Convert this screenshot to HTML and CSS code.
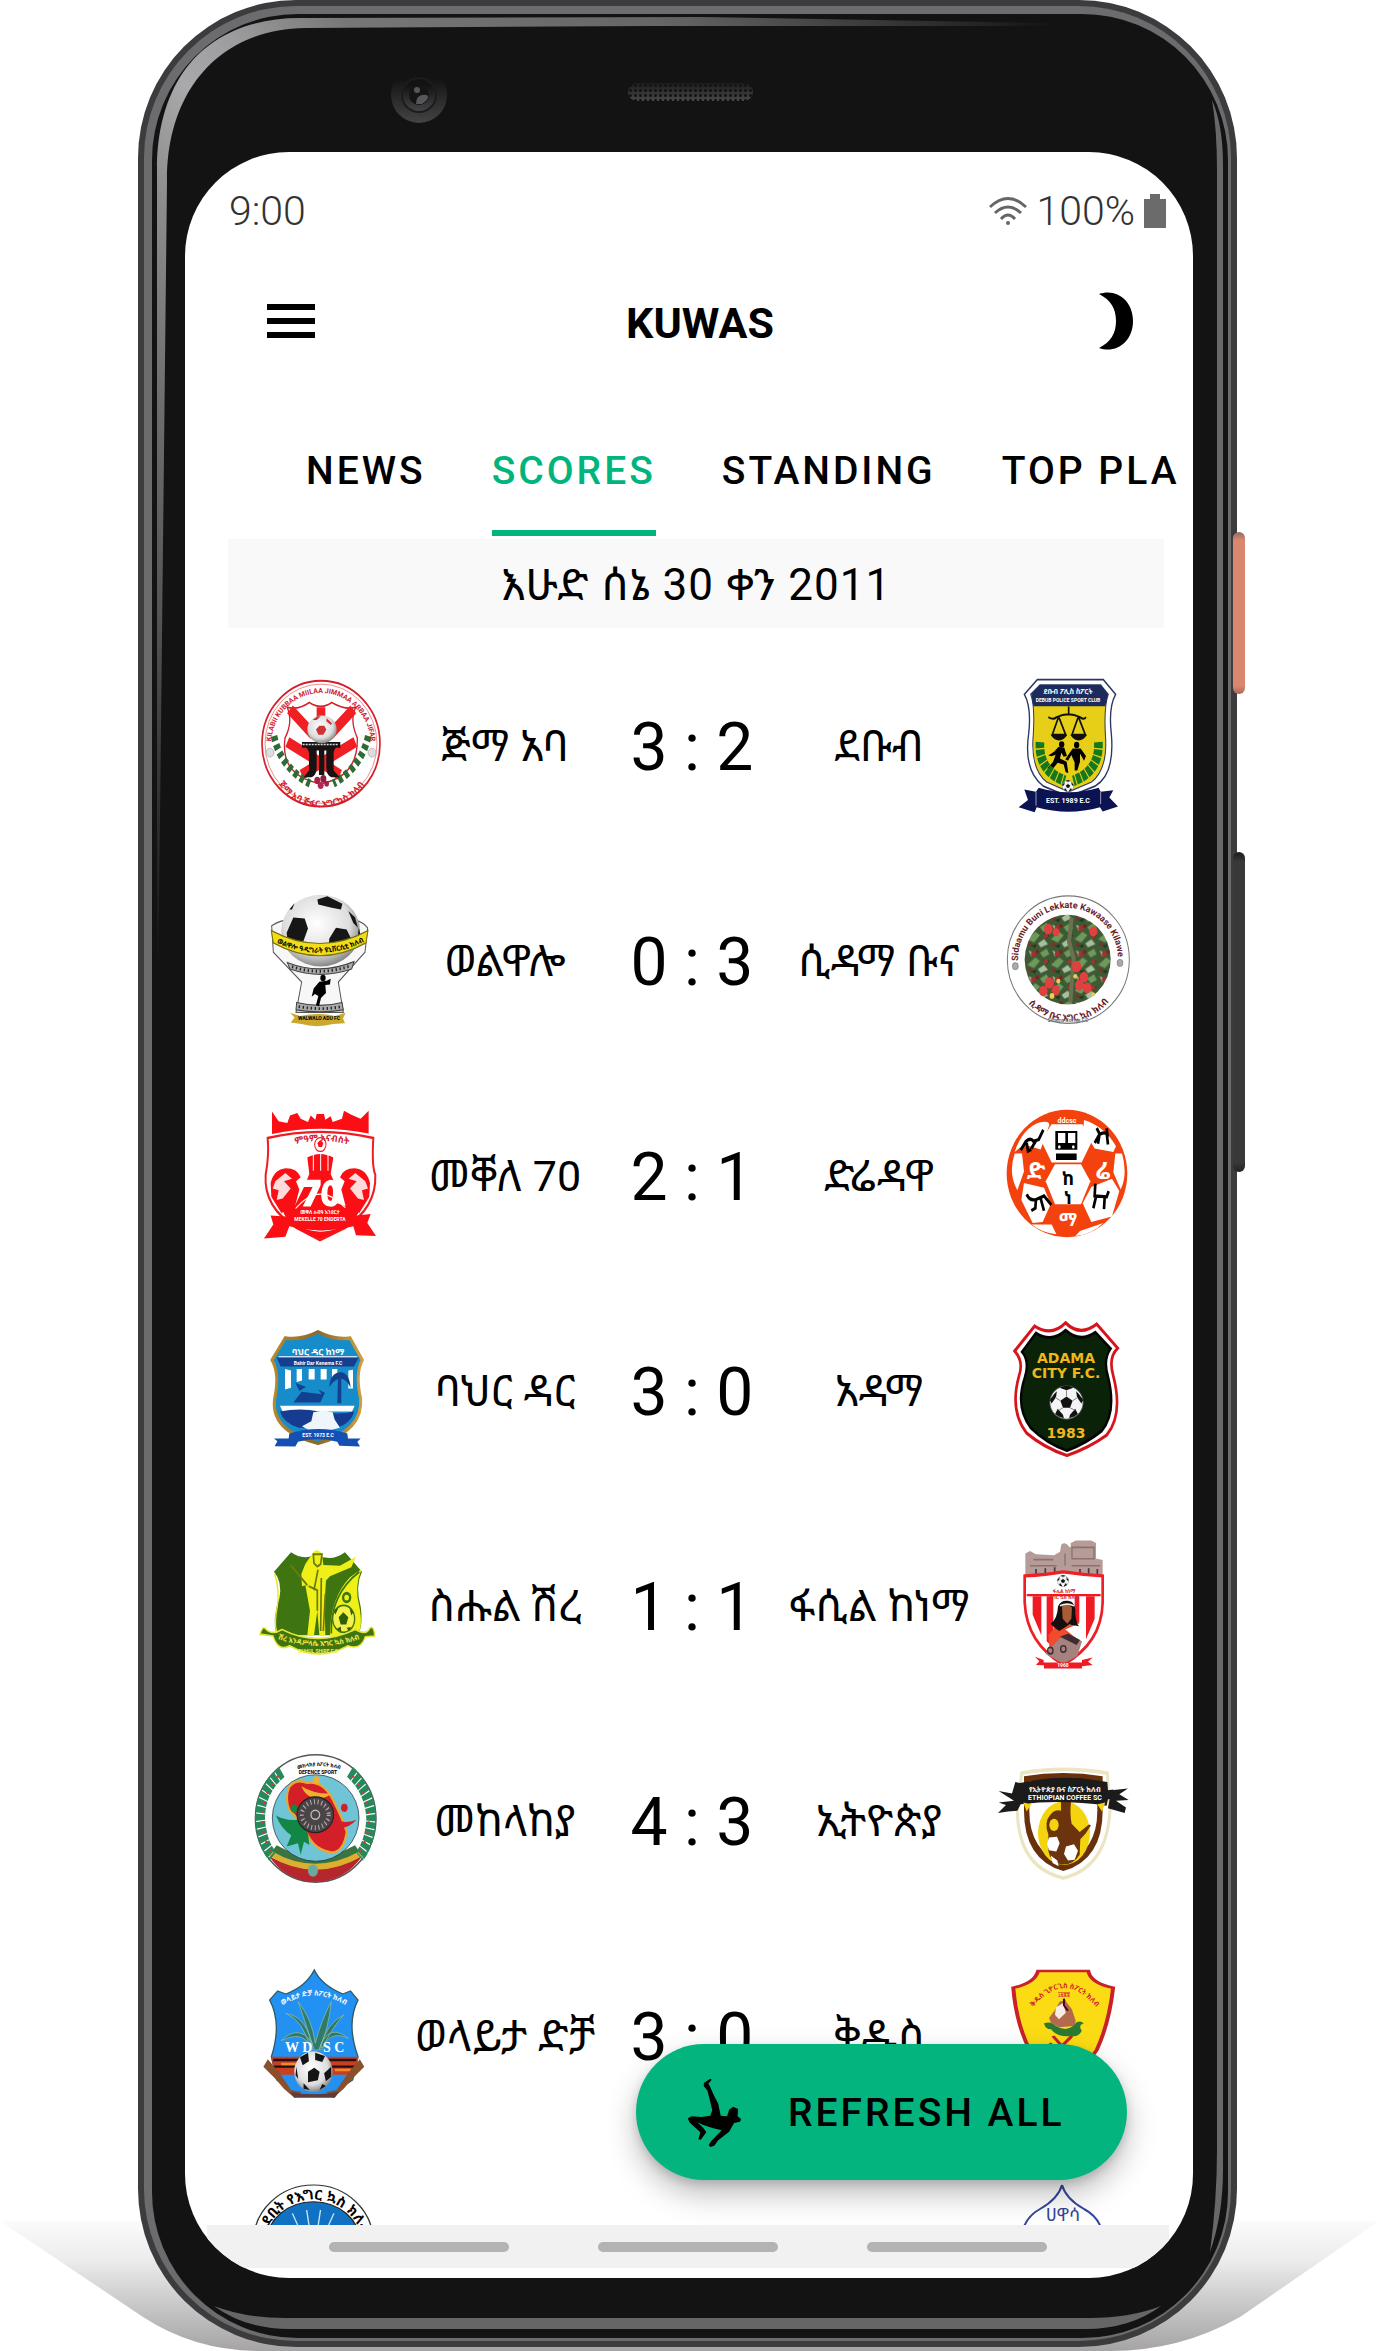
FILE: index.html
```html
<!DOCTYPE html>
<html lang="am">
<head>
<meta charset="utf-8">
<title>KUWAS – Scores</title>
<link rel="stylesheet" href="styles.css">
</head>
<body>
<svg class="defs" aria-hidden="true">
  <defs>
    <symbol id="ball" viewBox="0 0 40 40">
      <circle cx="20" cy="20" r="19" fill="#f4f4f4" stroke="#555" stroke-width="1"/>
      <path d="M20 13l7 5-3 8h-8l-3-8zM12 3l8 3 8-3-5-2h-6zM1 17l5-7 3-3-1 7-5 7zM39 17l-5-7-3-3 1 7 5 7zM7 33l3-6 6 7 1 4-6-2zM33 33l-3-6-6 7-1 4 6-2z" fill="#111"/>
      <path d="M20 13V6M27 18l6-4M24 26l6 3M16 26l-5 3M13 18l-6-4" stroke="#777" fill="none"/>
    </symbol>
    <pattern id="berries" width="71" height="63" patternUnits="userSpaceOnUse">
      <rect width="71" height="63" fill="#3d5a35"/>
      <path d="M0 40l24-18 14 8-18 18zM38 10l20-10 8 14-18 8z" fill="#6d9a5a"/>
      <path d="M32 50l18-10 12 12-22 8zM4 4l14 6-6 10z" fill="#a9bf9c"/>
      <path d="M48 26l18 4-8 10zM10 56l18-4-4 10z" fill="#24361f"/>
      <circle cx="18" cy="13" r="7" fill="#a92e2b"/><circle cx="30" cy="8" r="5" fill="#7b1f22"/>
      <circle cx="56" cy="32" r="6" fill="#a4352e"/><circle cx="8" cy="52" r="5" fill="#8a2a28"/>
    </pattern>
    <linearGradient id="shade" x1="0" y1="0" x2="0" y2="1">
      <stop offset="0" stop-color="#fbfbfb"/><stop offset=".3" stop-color="#ececec"/><stop offset="1" stop-color="#a5a3a4"/>
    </linearGradient>
    <linearGradient id="gold" x1="0" y1="0" x2="1" y2="0">
      <stop offset="0" stop-color="#b98a2b"/><stop offset=".5" stop-color="#8a6a2a"/><stop offset="1" stop-color="#d0a040"/>
    </linearGradient>
    <radialGradient id="orb" cx=".45" cy=".4" r=".6">
      <stop offset="0" stop-color="#fff"/><stop offset=".7" stop-color="#ddd"/><stop offset="1" stop-color="#888"/>
    </radialGradient>
    <linearGradient id="gloss" gradientUnits="userSpaceOnUse" x1="-500" y1="500" x2="550" y2="-550">
      <stop offset=".09" stop-color="#131313"/><stop offset=".26" stop-color="#555"/><stop offset=".36" stop-color="#6d6d6d"/>
      <stop offset=".457" stop-color="#8d8d8d"/><stop offset=".524" stop-color="#a9a9ab"/><stop offset=".57" stop-color="#9c9c9e"/>
      <stop offset=".63" stop-color="#777"/><stop offset=".78" stop-color="#666"/><stop offset=".97" stop-color="#131313"/>
    </linearGradient>
  </defs>
</svg>

<main class="stage">
  <svg class="ground" viewBox="0 0 1379 130" preserveAspectRatio="none" aria-hidden="true">
    <path d="M0 0L143 96Q195 130 260 130H1110Q1180 130 1240 96L1379 0z" fill="url(#shade)"/>
  </svg>
  <div class="phone">
    <span class="key power"></span>
    <span class="key volume"></span>
    <div class="ring">
      <div class="bezel">
        <div class="screen">
          <header>
            <div class="status">
              <span>9:00</span>
              <span class="status-right">
                <svg width="38" height="30" viewBox="0 0 38 30" fill="none" stroke="#666" stroke-width="3" aria-hidden="true"><path d="M1 11Q19-6 37 11M6 17Q19 5 32 17M12 23Q19 15 26 23"/><circle cx="19" cy="27" r="2" fill="#666" stroke="none"/></svg>
                <span>100%</span>
                <svg width="22" height="34" viewBox="0 0 22 34" aria-hidden="true"><path d="M6 0h10v5h6v29H0V5h6z" fill="#6b6b6b"/></svg>
              </span>
            </div>
            <div class="appbar">
              <button class="icon-button" aria-label="Menu"><svg width="48" height="34" viewBox="0 0 48 34"><path d="M0 0h48v6H0zM0 14h48v6H0zM0 28h48v6H0z"/></svg></button>
              <h1>KUWAS</h1>
              <button class="icon-button end" aria-label="Dark mode"><svg width="34" height="58" viewBox="0 0 34 58"><path d="M0 2C17-4 34 8 34 29S17 62 0 56C12 50 17 41 17 29S12 8 0 2z"/></svg></button>
            </div>
            <nav class="tabs">
              <a href="#news">NEWS</a>
              <a href="#scores" class="active" aria-current="page">SCORES</a>
              <a href="#standing">STANDING</a>
              <a href="#top">TOP PLAYERS</a>
            </nav>
          </header>

          <h2 class="date">እሁድ ሰኔ 30 ቀን 2011</h2>

          <ul class="matches">
            <li class="match">
              <svg class="crest" viewBox="0 0 180 215" aria-hidden="true">
                <g transform="translate(2 4) scale(.3333 .4082)">
                  <ellipse cx="273" cy="254" rx="177" ry="154" fill="#fff" stroke="#d3202b" stroke-width="5"/>
                  <ellipse cx="273" cy="254" rx="168" ry="146" fill="none" stroke="#e66" stroke-width="2"/>
                  <path d="M172 165Q205 172 238 153Q273 172 305 153Q345 172 377 165Q358 195 382 240Q385 335 273 352Q150 335 165 240Q190 200 172 165z" fill="#fff" stroke="#d3202b" stroke-width="4"/>
                  <path d="M180 170L250 232M370 170L300 232M172 250L330 330M376 250L215 330M273 165V190" stroke="#f01f24" stroke-width="26"/>
                  <path d="M132 235Q150 310 240 352M415 235Q395 310 310 352" stroke="#2f6b35" stroke-width="20" stroke-dasharray="13 9" fill="none"/>
                  <path d="M216 250h115v14h-12q-10 5-8 22v34l18 16h-25q-15-5-15-25v-40h-6v60h-16v-60h-7v40q0 20-15 25h-24l16-16v-40q0-12-10-16h-11z" fill="#171314"/>
                  <ellipse cx="276" cy="219" rx="44" ry="34" fill="url(#orb)"/>
                  <path d="M258 219l10-9h15l6 10-9 12h-15zM248 196l14-9h10l-12 9zM290 192l16 12-3 4-14-9z" fill="#cf3335"/>
                  <path d="M218 256h108" stroke="#ddd" stroke-width="4" stroke-dasharray="6 3"/>
                  <circle cx="262" cy="344" r="9" fill="#a2234a"/><circle cx="280" cy="340" r="9" fill="#8c1d3e"/><circle cx="272" cy="356" r="9" fill="#b32b53"/><circle cx="290" cy="352" r="7" fill="#a2234a"/>
                  <ellipse cx="120" cy="276" rx="12" ry="11" fill="#ddd" stroke="#777"/><ellipse cx="426" cy="276" rx="12" ry="11" fill="#ddd" stroke="#777"/>
                </g>
                <path id="arc1" d="M43 110A50 53 0 0 1 143 110" fill="none"/><path id="arc1b" d="M40 122A54 57 0 0 0 147 122" fill="none"/>
                <text class="tiny red arc"><textPath href="#arc1" startOffset="50%">KILABII KUBBAA MIILAA JIMMAA ABBAA JIFAR</textPath></text>
                <text class="small red arc"><textPath href="#arc1b" startOffset="50%">ጅማ አባ ጅፋር እግርኳስ ክለብ</textPath></text>
              </svg>
              <span class="team">ጅማ አባ</span><span class="score">3 : 2</span><span class="team">ደቡብ</span>
              <svg class="crest" viewBox="0 0 180 215" aria-hidden="true">
                <g transform="translate(4 4) scale(.3333 .4082)">
                  <path d="M172 97H370L407 133Q385 165 394 230Q405 330 345 358L266 384L190 358Q130 320 146 230Q155 165 133 133z" fill="#fff" stroke="#2a3765" stroke-width="4"/>
                  <path d="M180 110H362L385 133Q372 160 376 230Q385 315 335 348L266 372L200 348Q150 315 160 230Q165 160 152 133z" fill="#e8cf17" stroke="#2a3765" stroke-width="3"/>
                  <path d="M180 110H362L384 133L376 162H160L154 133z" fill="#1c2a5c"/>
                  <path d="M205 189q15 8 25 0q35-14 70 0q12 8 18 0M266 163v22M235 190l-18 42h40l-20-42M294 190l-18 42h40l-20-42" stroke="#111" stroke-width="5" fill="none"/>
                  <path d="M212 232h50q-10 14-25 14t-25-14zM271 232h50q-10 14-25 14t-25-14z" fill="#111"/>
                  <circle cx="245" cy="256" r="8"/><path d="M235 262l18 2 8 20-10 2-7-10-4 14 20 8 5 28-8-2-6-19-18-4-12 12-20 2 18-16 8-18-12 4-10-2 18-10z"/>
                  <circle cx="290" cy="257" r="8"/><path d="M278 266h24l16 18-6 12-12-18v20l-8 22h-8v-20l-10-18-10 14-8-4z"/>
                  <path d="M180 250Q175 320 255 345M355 250Q360 320 280 345" stroke="#16781d" stroke-width="26" stroke-dasharray="15 3" fill="none"/>
                  <path d="M133 366l35 6 8-10q90 22 180 0l6 10 38-4-12 18 26 22-46 12-8-10q-95 22-190 0l-6 12-48-12 28-18z" fill="#0c1352"/>
                  <path d="M168 372v34M362 372v30" stroke="#ccd" stroke-width="2"/>
                </g>
                <svg x="86" y="144" width="12" height="12"><use href="#ball"/></svg>
                <text class="tiny white" x="92" y="58" text-anchor="middle">ደቡብ ፖሊስ ስፖርት</text>
                <text class="micro white" x="92" y="66" text-anchor="middle">DEBUB POLICE SPORT CLUB</text>
                <text class="tiny white" x="92" y="167" text-anchor="middle">EST. 1989 E.C</text>
              </svg>
            </li>
            <li class="match">
              <svg class="crest" viewBox="0 0 180 215" aria-hidden="true">
                <g transform="translate(2 -211) scale(.3333 .4082)">
                  <path d="M125 700Q150 685 190 685H370Q400 690 413 705L405 765L325 838L340 912H198L215 838L130 765z" fill="#f7f7f7" stroke="#555" stroke-width="3"/>
                  <ellipse cx="272" cy="712" rx="118" ry="88" fill="url(#orb)"/>
                  <path d="M190 680l34 2 10 25-18 40h-42l-4-30zM262 636l30-8 45 18-4 14-28-4-40-8zM318 705l32 4 14 24-10 22-58-4 2-20zM178 660l16-16-8 16zM355 664l20 15 9 26-14-12zM386 705l8 24-12 12z" fill="#161616"/>
                  <path d="M124 712Q270 775 414 712L408 742Q270 805 130 742z" fill="#f3dc18" stroke="#77720e" stroke-width="3"/>
                  <path d="M172 790Q270 822 372 788L365 806Q270 832 180 806zM200 888q70 14 136 0l4 18q-70 10-142 0z" fill="#aaa" stroke="#444" stroke-width="3"/>
                  <path d="M186 800Q270 824 362 798M206 898q70 10 128 0" stroke="#222" stroke-width="7" stroke-dasharray="4 8" fill="none"/>
                  <circle cx="279" cy="828" r="8"/><path d="M268 837l22-2 12-5-2 14-14 1 2 20-15 12-6 20-9-3 7-22-10-5-10 7 6-20z"/>
                  <path d="M180 913l30 8q58-10 105 0l32-8-8 14 6 12-36 2q-48 10-95 0l-32-4 12-12z" fill="#cba72b"/>
                </g>
                <path id="arc2" d="M47 91Q92 113 138 90" fill="none"/>
                <text class="tiny arc"><textPath href="#arc2" startOffset="50%">ወልዋሎ ዓዲግራት ዩኒቨርሲቲ ክለብ</textPath></text>
                <text class="micro" x="91" y="169" text-anchor="middle">WALWALO ADU FC</text>
              </svg>
              <span class="team">ወልዋሎ</span><span class="score">0 : 3</span><span class="team">ሲዳማ ቡና</span>
              <svg class="crest" viewBox="0 0 180 215" aria-hidden="true">
                <g transform="translate(4 -211) scale(.3333 .4082)">
                  <ellipse cx="265" cy="783" rx="183" ry="156" fill="#fff" stroke="#777" stroke-width="3"/>
                  <ellipse cx="263" cy="783" rx="129" ry="110" fill="url(#berries)"/>
                  <path d="M275 680l-8 60 14 40-10 108" stroke="#6c7050" stroke-width="12" fill="none"/>
                  <g fill="#e0413f"><circle cx="290" cy="800" r="14"/><circle cx="312" cy="826" r="13"/><circle cx="322" cy="852" r="13"/><circle cx="298" cy="846" r="13"/><circle cx="208" cy="840" r="14"/><circle cx="228" cy="858" r="12"/><circle cx="190" cy="860" r="13"/><circle cx="205" cy="708" r="13"/><circle cx="228" cy="716" r="10"/><circle cx="340" cy="714" r="12"/></g>
                  <g fill="#e8d04b"><circle cx="216" cy="872" r="7"/><circle cx="286" cy="824" r="6"/><circle cx="235" cy="836" r="6"/><circle cx="340" cy="868" r="5"/></g>
                  <circle cx="106" cy="799" r="9" fill="#aaa" stroke="#444"/><circle cx="420" cy="791" r="9" fill="#aaa" stroke="#444"/>
                </g>
                <path id="arc3" d="M42 111A50 52 0 0 1 142 107" fill="none"/><path id="arc3b" d="M38 116A54 55 0 0 0 146 114" fill="none"/>
                <text class="small maroon arc"><textPath href="#arc3" startOffset="50%">Sidaamu Buni Lekkate Kawaase Kilawe</textPath></text>
                <text class="small maroon arc"><textPath href="#arc3b" startOffset="50%">ሲዳማ ቡና እግር ኳስ ክለብ</textPath></text>
                <text class="micro gray" x="92" y="171" text-anchor="middle">Sidama Coffee F.C</text>
              </svg>
            </li>
            <li class="match">
              <svg class="crest" viewBox="0 0 180 215" aria-hidden="true">
                <g transform="translate(2 -426) scale(.3333 .4082)" fill="#fb0e14">
                  <path d="M126 1155l20 24 26 4 8-18 22-6 10 14 22 8 8-16 14 10 4-14h22l4 14 16-8 6 14 28-8 6-20 22 10 28 10 24-20v56Q270 1185 126 1210z"/>
                  <path d="M113 1220Q270 1190 430 1220Q425 1290 436 1310Q440 1390 345 1440L270 1470L200 1440Q100 1390 107 1310Q118 1260 113 1220z" fill="#fff" stroke="#ef1c22" stroke-width="6"/>
                  <path d="M232 1268q38-18 78 0l-8 40 16 30 4 50-50 20-60-4-20-14 30-50 16-32z"/>
                  <path d="M122 1330q10-34 46-36 34 0 44 22l-14 10 10 20-14 44-40 14-30-40zM420 1330q-10-34-46-36-34 0-44 22l14 10-10 20 14 44 40 14 30-40z"/>
                  <path d="M136 1326l30-20 20 14-24 6 20 18-24 24-18 4 6-24-18-4zM406 1326l-30-20-20 14 24 6-20 18 24 24 18 4-6-24 18-4z" fill="#fff" opacity=".85"/>
                  <path d="M160 1400q110-50 222 0l-40 42-72 26-72-26z"/>
                  <path d="M218 1322h54v14l-30 52h-24l30-48h-30zM300 1322q28 0 28 34t-28 32-26-32 26-34zm0 14q-8 4-8 20t8 18 9-18-9-20z" fill="#fff"/>
                  <path d="M190 1400q80-85 165 0M215 1438q58 20 115 0M250 1250v50M272 1250v50M294 1250v50" stroke="#fff" stroke-width="3" fill="none"/>
                  <circle cx="271" cy="1236" r="17" fill="#fff" stroke="#ef1c22" stroke-width="3"/><path d="M262 1232l9-7 9 7-4 10h-10z"/>
                  <path d="M122 1410l45 2q-10-8-5-26 110 26 222-4 4 22-4 28l42-4-10 22 26 32-60-2-8-22q-96 20-192 0l-12 26-64 4 28-34z"/>
                </g>
                <path id="arc4" d="M50 84Q92 66 138 84" fill="none"/>
                <text class="small red arc"><textPath href="#arc4" startOffset="50%">ምዓም አናብስት</textPath></text>
                <text class="micro white" x="92" y="148" text-anchor="middle">መቐለ ሰብዓ እንደርታ</text>
                <text class="micro white" x="92" y="155" text-anchor="middle">MEKELLE 70 ENDERTA</text>
              </svg>
              <span class="team">መቐለ 70</span><span class="score">2 : 1</span><span class="team">ድሬዳዋ</span>
              <svg class="crest" viewBox="0 0 180 215" aria-hidden="true">
                <g transform="translate(4 -426) scale(.3333 .4082)">
                  <ellipse cx="261" cy="1307" rx="181" ry="156" fill="#f4420e"/>
                  <g fill="#fff"><path d="M215 1186h92l30 40-32 54h-90l-32-54z"/><path d="M225 1284h78l28 42-28 56h-78l-28-56z"/><path d="M132 1236l-28 18Q128 1196 178 1182q30-6 30 6l-26 60z"/><path d="M312 1176q62 16 96 64l-8 14-56-8-34-46z"/><path d="M104 1258h22l6 44-20 46q-28-40-8-90zM406 1258h20q18 50-4 88l-22-42z"/><path d="M132 1330l60 12 20 40-24 44-30 2-34-56zM334 1340l62-20 22 30-22 62-62 14-26-46z"/><path d="M155 1432h60l14 24q-44-4-74-24zM300 1448l70-20q-34 28-84 32z"/></g>
                  <path d="M226 1203h66v46h-66zM228 1258h62v16h-62z"/><path d="M234 1208h22v24h-22zM264 1208h22v24h-22z" fill="#fff"/><circle cx="238" cy="1242" r="4" fill="#fff"/><circle cx="280" cy="1242" r="4" fill="#fff"/>
                  <g fill="none" stroke="#000" stroke-width="8"><path d="M122 1250l16-22q14-10 22 0l16-4 14-24M140 1232l4 20 10-4M168 1226l-14 20M344 1232l14-20q12-8 24-2l-2-14M350 1196l10 16M358 1214l-4 20M380 1208l4 28M140 1358q10 18 30 12l22-8 22 22M168 1370l-2 22-12 6M182 1368l10 30M346 1332l-2 30 36 2 6-14M348 1364l-8 28M374 1366l-2 28"/></g>
                </g>
                <text class="tiny white" x="91" y="57" text-anchor="middle">ddcsc</text>
                <text class="badge white" x="60" y="113" text-anchor="middle">ድ</text><text class="badge white" x="127" y="113" text-anchor="middle">ሬ</text>
                <text class="mid" x="92" y="119" text-anchor="middle">ከ</text><text class="mid" x="92" y="138" text-anchor="middle">ነ</text>
                <text class="mid white" x="92" y="160" text-anchor="middle">ማ</text>
              </svg>
            </li>
            <li class="match">
              <svg class="crest" viewBox="0 0 180 215" aria-hidden="true">
                <g transform="translate(2 -1) scale(.3333 .4082)">
                  <path d="M166 142Q215 148 264 127Q315 148 360 142L397 196Q375 230 392 290Q400 370 264 400Q120 370 134 290Q150 230 126 196z" fill="#178ccb" stroke="url(#gold)" stroke-width="9"/>
                  <path d="M140 190H386L372 212H152z" fill="#173d8e"/><path d="M146 188H382" stroke="#fff" stroke-width="3"/>
                  <path d="M165 218l18 4v42l-18 4zM200 218h16v28l-16 4zM236 218h18v26h-18zM272 218h18v26h-18zM306 218h16v26h-16zM355 222l14-2v46h-14z" fill="#fff"/>
                  <path d="M190 300l25-26 60 6-10-12 20 8-14 24zM196 252l32 10-20 10zM324 238h10v64h-12zM298 262q2-32 30-36 30-2 34 38-12-20-28-22-20 0-36 20z" fill="#12418f"/>
                  <path d="M150 308H374L366 322H158z" fill="#fff"/>
                  <path d="M150 322q60-10 118 0t104 0Q365 350 320 362H206Q160 350 150 322z" fill="#153c90"/>
                  <path d="M250 324l30-4 28 4 6 18 16 20-40 8h-48l-26-12 28-12z" fill="#eef5fb"/>
                  <path d="M132 388h44l2-12q88-22 174 0l2 12h38l-10 8 8 12-62-2-6-10q-58-12-118 0l-8 12-62-1 8-12z" fill="#1450b4"/>
                </g>
                <text class="small white" x="90" y="74" text-anchor="middle">ባህር ዳር ከነማ</text>
                <text class="micro white" x="90" y="84" text-anchor="middle">Bahir Dar Kenema F.C</text>
                <text class="micro white" x="90" y="156" text-anchor="middle">EST. 1973 E.C</text>
              </svg>
              <span class="team">ባህር ዳር</span><span class="score">3 : 0</span><span class="team">አዳማ</span>
              <svg class="crest" viewBox="0 0 180 215" aria-hidden="true">
                <g transform="translate(4 -1) scale(.3333 .4082)">
                  <path d="M164 113Q215 140 257 105Q300 140 350 108L413 167Q384 190 400 235Q430 330 380 380Q330 410 261 430Q190 410 140 375Q88 320 117 235Q132 200 104 174z" fill="#fff" stroke="#d6141c" stroke-width="8"/>
                  <path d="M168 130Q215 155 257 123Q300 155 346 128L392 168Q368 195 385 240Q410 325 365 370Q320 400 261 418Q200 400 152 362Q105 310 134 240Q150 200 126 176z" fill="#092208" stroke="#050505" stroke-width="7"/>
                </g>
                <svg x="73" y="103" width="35" height="37" viewBox="0 0 40 40"><use href="#ball"/></svg>
                <text class="adama" x="90" y="82" text-anchor="middle">ADAMA</text><text class="adama" x="90" y="97" text-anchor="middle">CITY F.C.</text><text class="adama" x="90" y="157" text-anchor="middle">1983</text>
              </svg>
            </li>
            <li class="match">
              <svg class="crest" viewBox="0 0 180 215" aria-hidden="true">
                <g transform="translate(2 -216) scale(.3333 .4082)">
                  <path d="M183 667Q215 685 245 676L285 680Q315 685 345 667L396 715Q375 750 392 800Q400 840 385 870H140Q125 830 148 780Q158 740 132 715z" fill="#3f7510"/>
                  <path d="M134 720Q150 760 142 800Q130 850 144 868" fill="none" stroke="#e8e523" stroke-width="4"/>
                  <path d="M395 708Q372 750 388 800Q400 850 382 870H300Q300 780 360 728z" fill="#eef018"/>
                  <path d="M388 715Q300 770 304 866" fill="none" stroke="#3f7510" stroke-width="5"/>
                  <circle cx="341" cy="830" r="33" fill="#f4f24a" stroke="#3f7510" stroke-width="4"/><path d="M326 826l14-12 15 12-6 18h-17zM312 810l14-8-10 18zM358 802l12 12-6 8zM320 855l12-6 2 12zM350 852l14-2-8 10z" fill="#2f6008"/><circle cx="350" cy="778" r="14" fill="#3f7510"/><circle cx="350" cy="778" r="7" fill="#eef018"/>
                  <path d="M246 672q14-20 30 0l4 26 50 2 48-22-14 26-64 22-12 10-4 50 2 84h-18l-6-60-10 60h-20l8-60-14-62-10 2-2-30 12-24z" fill="#eef018"/>
                  <path d="M250 672h26l-4 24-10 6-10-8zM236 750l26 10v50M274 730l-2 130M286 770l-6 90M182 698l50 50M264 710l-12 50" stroke="#6c7812" stroke-width="5" fill="none"/>
                  <path d="M90 868q8-22 16-14 20 18 50 2 105 44 220 0 34 16 44-4 12-6 14 20l-28 2q-14 34-52 22-88 40-175 0-34 16-50-24l-34-4z" fill="#3f7510" stroke="#e1e637" stroke-width="4"/>
                </g>
                <path id="arc5" d="M47 142Q92 158 135 142" fill="none"/>
                <text class="tiny yellow arc"><textPath href="#arc5" startOffset="50%">ሽረ እንዳሥላሴ እግር ኳስ ክለብ</textPath></text>
                <text class="micro yellow" x="90" y="157" text-anchor="middle">SUHUL SHIRE F.C</text>
              </svg>
              <span class="team">ስሑል ሽረ</span><span class="score">1 : 1</span><span class="team">ፋሲል ከነማ</span>
              <svg class="crest" viewBox="0 0 180 215" aria-hidden="true">
                <g transform="translate(4 -216) scale(.3333 .4082)">
                  <path d="M136 725V670l14-6 18 8 54 2 18-8 4-18q12-8 22 4l6 4v-12l16-6h46l14 6v38l20 4V725z" fill="#b69c98"/>
                  <path d="M150 700h80M255 670v30M276 655h66v28h-66zM275 700h85M160 685h60" stroke="#8c716e" stroke-width="4" fill="none"/><path d="M168 708v14M196 706v14M224 704v14M300 708v14M326 706v14M352 708v14" stroke="#4d3436" stroke-width="5"/>
                  <path d="M134 725Q200 722 250 715Q310 722 368 725V790Q365 890 250 942Q140 890 134 790z" fill="#fff" stroke="#ef1f26" stroke-width="8"/>
                  <path d="M158 775h26v95l-26-50zM200 775h20v125l-20-15zM284 775h14v120l-14 15zM318 775h26v55l-26 50z" fill="#f01b22"/>
                  <path d="M140 772H362" stroke="#f01b22" stroke-width="6"/>
                  <path d="M205 870l20-20h20l52-12v70l-46 28-42-30z" fill="#ef4b2c"/><path d="M256 856l44-16v45z" fill="#fff"/>
                  <path d="M212 842q20-10 22-42 8-16 30-14 24 2 22 32 4 28 12 30l-30-4-30 16q-16-8-26-18z" fill="#15100f"/><path d="M246 800q16-8 30 2l-2 28-12 12-14-12z" fill="#a95b36"/><path d="M240 798q22-8 42 0" stroke="#eee" stroke-width="4" fill="none"/>
                  <path d="M196 915l40-34 24-16 46 20-14 36-42 20z" fill="#a4827f"/><path d="M240 874l24-8 36 16-10 12z" fill="#412b2e"/>
                  <circle cx="211" cy="908" r="8" fill="none" stroke="#412b2e" stroke-width="4"/><circle cx="250" cy="904" r="8" fill="none" stroke="#412b2e" stroke-width="4"/>
                  <path d="M165 923l26 8 0 6h115v-6l32-6-14 10 14 8-32 3v6H192v-8l-24-1 10-9z" fill="#f01b22"/>
                </g>
                <svg x="81" y="79" width="12" height="12"><use href="#ball"/></svg>
                <text class="micro red" x="88" y="97" text-anchor="middle">ፋሲል ከነማ</text><text class="micro red" x="88" y="103" text-anchor="middle">እግር ኳስ ክለብ</text>
                <text class="micro white" x="87" y="171" text-anchor="middle">1968</text>
              </svg>
            </li>
            <li class="match">
              <svg class="crest" viewBox="0 0 180 215" aria-hidden="true">
                <g transform="translate(2 -431) scale(.3333 .4082)">
                  <ellipse cx="257" cy="1319" rx="181" ry="156" fill="#fdfdfd" stroke="#555" stroke-width="4"/>
                  <path d="M118 1412Q255 1470 398 1410Q345 1474 257 1474T118 1412z" fill="#b5272d"/>
                  <path d="M125 1400Q255 1455 390 1398L400 1410Q255 1480 115 1410z" fill="#dcb02e"/><path d="M140 1385Q255 1440 375 1385L388 1400Q255 1460 126 1400z" fill="#3a7441"/>
                  <ellipse cx="257" cy="1318" rx="130" ry="106" fill="#6fc5d6" stroke="#234" stroke-width="2"/>
                  <path d="M155 1205Q90 1250 90 1320Q95 1380 128 1412M360 1205Q420 1250 424 1320Q420 1380 388 1412" stroke="#25895b" stroke-width="30" stroke-dasharray="15 3" fill="none"/>
                  <path d="M145 1215Q94 1262 96 1320Q100 1380 134 1410M368 1215Q415 1262 418 1320Q412 1380 382 1410" stroke="#dc3636" stroke-width="7" stroke-dasharray="5 20" fill="none"/>
                  <path d="M178 1242q20-22 54-10 46-6 76 40 28 44 42 80-10 54-50 50-60-10-76-64l-46-40q-14-30 0-56z" fill="#d32028" stroke="#eda72f" stroke-width="6"/>
                  <path d="M214 1240q40 20 90 18-18 14-50 12-28-6-40-30z" fill="#f0b030"/><circle cx="260" cy="1226" r="10" fill="#f0b030"/>
                  <path d="M138 1312q30 14 66 10l30 32 4 30-16-8-10 32-8-28-34 8 14-28q-30-14-46-48z" fill="#128745"/><circle cx="192" cy="1295" r="10" fill="#128745"/><circle cx="343" cy="1293" r="10" fill="#d32028"/><path d="M305 1320q40 14 74 2-20 20-50 20l6 36-30-34z" fill="#d32028"/>
                  <ellipse cx="256" cy="1310" rx="55" ry="44" fill="#4b4446" stroke="#222" stroke-width="3"/><ellipse cx="256" cy="1310" rx="40" ry="32" fill="none" stroke="#b8aeb0" stroke-width="12" stroke-dasharray="3 8"/><ellipse cx="256" cy="1310" rx="13" ry="11" fill="none" stroke="#bbb" stroke-width="4"/>
                  <circle cx="249" cy="1447" r="15" fill="#6aa9a0"/>
                </g>
                <path id="arc6" d="M60 62Q90 48 122 62" fill="none"/>
                <text class="micro arc"><textPath href="#arc6" startOffset="50%">መከላከያ ስፖርት ክለብ</textPath></text>
                <text class="micro" x="90" y="63" text-anchor="middle">DEFENCE SPORT</text>
              </svg>
              <span class="team">መከላከያ</span><span class="score">4 : 3</span><span class="team">ኢትዮጵያ</span>
              <svg class="crest" viewBox="0 0 180 215" aria-hidden="true">
                <g transform="translate(4 -431) scale(.3333 .4082)">
                  <path d="M125 1208Q250 1190 382 1208L390 1300Q380 1440 250 1465Q115 1440 112 1300z" fill="#fff" stroke="#ebe5c3" stroke-width="9"/>
                  <path d="M132 1216Q250 1200 368 1216V1300Q368 1420 250 1448Q132 1420 132 1300z" fill="#69300c"/>
                  <path d="M148 1228H352V1300Q352 1400 250 1430Q148 1400 148 1300z" fill="#fff"/>
                  <circle cx="252" cy="1355" r="78" fill="#f3d40e"/>
                  <path d="M243 1278h30q-4 30 2 54l24 20 28-18 6 2-16 20-16 14-2 38q-20 26-54 24-34-4-40-34v-40q-14-30 6-48 14-14 32-10z" fill="#6c340e"/><ellipse cx="222" cy="1335" rx="14" ry="15" fill="#f3d40e"/>
                  <path d="M207 1366l24-2 8 16-10 20-22-3-6-16zM258 1388l24-6 12 16-10 22-20 2-12-16zM212 1410l20 12 4 14-18-8z" fill="#fff"/>
                  <path d="M106 1230l14 2Q250 1208 382 1230l2 20 16-2 2 24h-18l-4 16Q250 1272 122 1284l-10 16-28 2-30 4 24-20-22-6 46-4-46-24 40 6z" fill="#1b1b1b"/><path d="M394 1250l50-4-26 14 28 14-38 2 30 16-4 14-50-12z" fill="#1b1b1b"/>
                  <path d="M130 1280l24 4-14 18zM376 1280l-24 4 14 18z" fill="#f3d40e"/>
                </g>
                <text class="tiny white" x="89" y="81" text-anchor="middle">የኢትዮጵያ ቡና ስፖርት ክለብ</text>
                <text class="tiny white" x="89" y="89" text-anchor="middle">ETHIOPIAN COFFEE SC</text>
              </svg>
            </li>
            <li class="match">
              <svg class="crest" viewBox="0 0 180 215" aria-hidden="true">
                <g transform="translate(-228 -6) scale(.4464 .3333)">
                  <path d="M704 150Q720 195 768 222L785 213L802 240Q775 310 802 410L790 480L740 525H665L620 480L608 410Q632 310 604 240L622 213L640 222Q685 200 704 150z" fill="#2391f2" stroke="#2b5a66" stroke-width="3"/>
                  <path d="M608 410H802L795 464H616z" fill="#c93f20"/><path d="M612 420H798M614 440H796" stroke="#231012" stroke-width="7"/><path d="M630 432h40M750 450h36" stroke="#ee8a2b" stroke-width="7"/>
                  <path d="M600 418l26 40 26 52 24 6-16 18-24-28-18-28-28-38zM806 418l-26 40-26 52-24 6 16 18 24-28 18-28 28-38z" fill="#8b4f2a"/><path d="M650 515q50 16 110 0l-10 18h-90z" fill="#5d3c3e"/>
                  <path d="M704 390Q690 330 668 245Q700 300 706 370Q720 300 742 245Q736 330 714 390zM700 390Q690 290 640 280Q680 300 696 390zM716 390Q730 310 770 285Q745 320 720 390zM694 380Q680 330 630 362Q670 310 700 370zM718 375Q740 310 780 355Q740 330 722 384z" fill="#2f7a68" stroke="#8dbba4" stroke-width="2"/>
                  <ellipse cx="702" cy="455" rx="43" ry="61" fill="url(#orb)"/><path d="M690 455l14-12 12 12-4 26-22 6zM672 412l18-14 2 26-14 12zM706 398l22 10-6 18-16-6zM664 440l4 36-6-10zM726 460l16-20v30l-12 14zM680 490l14 20-14-4zM722 492l-6 18 14-12z" fill="#151515"/>
                </g>
                <path id="arc7" d="M44 87Q86 52 128 87" fill="none"/>
                <text class="tiny white arc"><textPath href="#arc7" startOffset="50%">ወላይታ ድቻ ስፖርት ክለብ</textPath></text>
                <text class="serif white" x="57" y="126">W D</text><text class="serif white" x="95" y="126">S C</text>
              </svg>
              <span class="team">ወላይታ ድቻ</span><span class="score">3 : 0</span><span class="team">ቅዱስ</span>
              <svg class="crest" viewBox="0 0 180 215" aria-hidden="true">
                <g transform="translate(-376 -6) scale(.4967 .3333)">
                  <path d="M882 153H983Q988 190 1033 203Q1025 310 1000 390Q970 460 932 490Q890 450 865 390Q838 310 832 203Q875 190 882 153z" fill="#fbdc14" stroke="#c9202a" stroke-width="8"/>
                  <path d="M912 348l18 30 20-30M905 370l54 60" stroke="#c9202a" stroke-width="7" fill="none"/>
                  <path d="M894 310q14-8 24 8 20 18 34 0 12-22 22-8-12 6-4 22-6 20-22 16-28 4-40-20-12 0-14-18z" fill="#2b7a33"/>
                  <path d="M916 270l10-26h8v-12l6 16 10 20 8 36-4 14-30 4-16-14-4-14z" fill="#b3694d"/><path d="M918 262l14-12 6 28-14 20-8-14z" fill="#f5ede4"/><path d="M934 236v20l8 16" stroke="#402" stroke-width="4" fill="none"/>
                </g>
                <path id="arc8" d="M50 92Q88 32 128 92" fill="none"/>
                <text class="tiny red arc"><textPath href="#arc8" startOffset="50%">ቅዱስ ጊዮርጊስ ስፖርት ክለብ</textPath></text><text class="micro red" x="88" y="71" text-anchor="middle">፲፱፳፰</text>
              </svg>
            </li>
            <li class="match">
              <svg class="crest" viewBox="0 0 180 215" aria-hidden="true">
                <g transform="translate(-228 -221) scale(.4464 .3333)">
                  <ellipse cx="702" cy="965" rx="134" ry="170" fill="#fff" stroke="#333" stroke-width="3"/>
                  <ellipse cx="702" cy="965" rx="104" ry="120" fill="#1172c4" stroke="#222" stroke-width="3"/>
                  <path d="M655 880l20 60M687 870l8 70M718 870l-8 70M748 880l-20 60" stroke="#cfe6f5" stroke-width="3"/>
                </g>
                <path id="arc9" d="M37 104A48 45 0 0 1 134 104" fill="none"/>
                <text class="name arc"><textPath href="#arc9" startOffset="50%">ደደቢት የእግር ኳስ ክለብ</textPath></text>
              </svg>
              <span></span><span></span><span></span>
              <svg class="crest" viewBox="0 0 180 215" aria-hidden="true">
                <path d="M86 44Q90 58 108 68Q127 78 127 100M86 44Q82 58 64 68Q46 78 45 100" fill="none" stroke="#34479a" stroke-width="2"/>
                <text class="hawassa" x="87" y="80" text-anchor="middle">ሀዋሳ</text>
              </svg>
            </li>
          </ul>

          <div class="sysnav">
            <button aria-label="Recent apps"></button><button aria-label="Home"></button><button aria-label="Back"></button>
          </div>

          <button class="refresh">
            <svg width="54" height="70" viewBox="0 0 54 70" aria-hidden="true"><g transform="translate(-88 -157) scale(.4967 .3333)"><path d="M222 473L209 486L209 496L216 508L220 530L226 568L222 584L204 588L184 586L177 592L180 604L202 634L198 655L203 656L214 634L208 620L196 604L208 612L228 622L245 628L224 660L219 672L222 678L230 674L238 658L260 632L270 606L282 602L284 594L277 586L278 564L268 557L260 566L256 586L243 584L238 548L229 522L221 495L218 488L225 476z"/></g></svg>
            <span>REFRESH ALL</span>
          </button>
        </div>
        <svg class="camera" viewBox="0 0 56 56" aria-hidden="true">
          <defs><linearGradient id="lens" x1="0" y1="0" x2="0" y2="1"><stop offset=".2" stop-color="#131313"/><stop offset="1" stop-color="#444"/></linearGradient></defs>
          <circle cx="28" cy="28" r="28" fill="url(#lens)"/><circle cx="28" cy="28" r="18" fill="#1c1c1c"/><circle cx="28" cy="28" r="16" fill="url(#lens)"/><circle cx="28" cy="28" r="10" fill="#151515"/>
          <ellipse cx="26" cy="23" rx="3" ry="3" fill="#57565b"/><path d="M25 37q0-8 6-9t6 2-6 7z" fill="#57565b"/>
        </svg>
        <span class="speaker"></span>
      </div>
    </div>
    <svg class="glare" viewBox="138 0 1099 2347" preserveAspectRatio="none" aria-hidden="true">
      <path d="M157 1000V170C157 72 212 18 300 18L700 17L1100 24L1000 26H650L305 28C222 29 167 88 167 180L158 1000z" fill="url(#gloss)"/>
      <path d="M1212 100Q1223 125 1223 165V2170Q1223 2215 1210 2252Q1217 2200 1217 2150V170Q1217 130 1212 100z" fill="#686868"/>
      <path d="M214 2306Q245 2318 285 2318H1090Q1130 2318 1161 2306Q1130 2329 1085 2329H290Q245 2329 214 2306z" fill="#666"/>
    </svg>
  </div>
</main>
</body>
</html>
```
FILE: styles.css
```css
* { box-sizing: border-box; }
body {
  margin: 0;
  background: #fff;
  color: #000;
  font-family: Roboto, "Noto Sans", "Noto Sans Ethiopic", "Abyssinica SIL", sans-serif;
}
button { border: 0; padding: 0; background: none; font: inherit; color: inherit; }
a { color: inherit; text-decoration: none; }
svg { display: block; }
.defs { position: absolute; width: 0; height: 0; }

.stage { position: relative; padding: 0 142px 4px 138px; overflow: hidden; }
.ground { position: absolute; left: 0; bottom: 0; width: 100%; height: 130px; }

/* handset body: outer shell, metal ring, black bezel */
.phone { position: relative; padding: 6px; border-radius: 158px; background: #3c3c3e; }
.ring { padding: 8px 3px 3px 8px; border-radius: 152px; background: #6c6c6f; position: relative; }
.bezel { position: relative; padding: 138px 35px 60px 33px; border-radius: 146px; background: #131313; }
.glare { position: absolute; inset: 0; width: 100%; height: 100%; pointer-events: none; }
.key { position: absolute; right: -8px; width: 12px; border-radius: 6px; }
.power { top: 532px; height: 162px; background: linear-gradient(#8f6a60, #d9876e 8px, #d9876e 154px, #a76a59); }
.volume { top: 852px; height: 320px; background: linear-gradient(#1c1c1c, #393939 10px, #393939 310px, #222); }
.camera { position: absolute; top: 53px; left: 239px; width: 56px; height: 56px; }
.speaker {
  position: absolute; top: 69px; left: 476px; width: 125px; height: 18px; border-radius: 9px;
  background: radial-gradient(circle, #141414 1px, transparent 2px) 0 0 / 5px 5px, linear-gradient(#1c1c1c, #484848);
}

.screen { position: relative; overflow: hidden; border-radius: 104px; background: #fff; }
.status {
  display: flex; justify-content: space-between; align-items: center;
  height: 115px; padding: 2px 27px 0 44px; font-size: 41px; line-height: 48px; font-weight: 300; color: #333;
}
.status-right { display: flex; align-items: center; gap: 9px; }
.appbar { display: grid; grid-template-columns: 1fr auto 1fr; align-items: center; height: 108px; padding: 0 60px 0 82px; }
.appbar h1 { margin: 0; padding-top: 3px; font-size: 43px; font-weight: 700; line-height: 48px; }
.icon-button { justify-self: start; }
.end { justify-self: end; }
.tabs {
  display: flex; gap: 66px; margin: 0 16px 3px 0; padding-left: 121px; overflow: hidden;
  font-size: 39px; font-weight: 500; line-height: 44px; letter-spacing: 3px; white-space: nowrap;
}
.tabs a { padding: 74px 0 37px; border-bottom: 6px solid transparent; }
.tabs .active { color: #00b57d; border-color: #00b57d; }
.date {
  margin: 0 29px 0 43px; padding: 22px 20px 18px; background: #f9f9f9; text-align: center;
  font-size: 44px; font-weight: 400; line-height: 49px; letter-spacing: 1px;
}
.matches { height: 1597px; margin: 0; padding: 8px 37px 0 43px; list-style: none; overflow: hidden; }
.match { display: grid; grid-template-columns: 180fr 194fr 180fr 194fr 180fr; align-items: center; height: 215px; text-align: center; }
.crest { width: 100%; height: 215px; overflow: visible; }
.team { padding-top: 5px; font-size: 43px; line-height: 50px; white-space: nowrap; justify-self: center; }
.score { padding-top: 8px; font-size: 66px; line-height: 72px; white-space: nowrap; justify-self: center; }

.sysnav { display: flex; justify-content: center; align-items: center; gap: 89px; height: 43px; margin: 0 24px 10px 22px; background: #f1f1f1; }
.sysnav button { width: 180px; height: 10px; border-radius: 5px; background: #b3b3b3; }

.refresh {
  position: absolute; right: 66px; bottom: 98px; display: flex; align-items: center; gap: 46px;
  width: 491px; height: 136px; padding: 2px 52px 0; border-radius: 68px; background: #03b47e;
  box-shadow: 0 14px 30px rgba(0, 0, 0, .26), 0 4px 10px rgba(0, 0, 0, .14);
  font-size: 39px; font-weight: 500; letter-spacing: 3px; white-space: nowrap;
}

/* lettering on the club crests */
.arc { text-anchor: middle; }
.micro { font-size: 5px; font-weight: 700; }
.tiny { font-size: 7px; font-weight: 700; }
.small { font-size: 9px; font-weight: 700; }
.name { font-size: 14px; font-weight: 700; }
.mid { font-size: 18px; font-weight: 700; }
.badge { font-size: 24px; font-weight: 700; }
.adama { font-family: "DejaVu Sans", sans-serif; font-size: 14px; font-weight: 700; fill: #f2b51c; }
.serif { font-family: "Liberation Serif", serif; font-size: 14px; font-weight: 700; }
.hawassa { font-size: 18px; fill: #34479a; }
.white { fill: #fff; }
.red { fill: #d3202b; }
.maroon { fill: #6b1a1f; }
.gray { fill: #777; }
.yellow { fill: #f0ee50; }
```
